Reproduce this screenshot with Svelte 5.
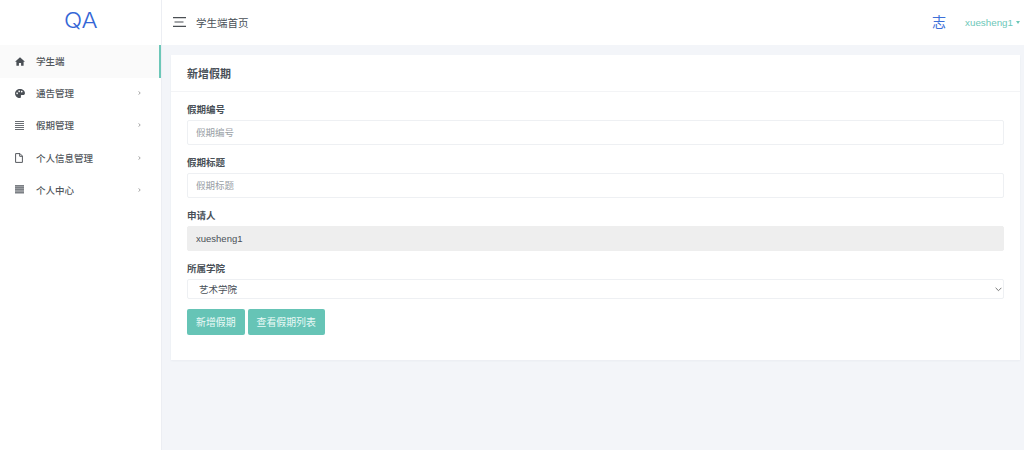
<script>
  const menu = [
    { label: '学生端', icon: 'home', active: true },
    { label: '通告管理', icon: 'palette', arrow: true },
    { label: '假期管理', icon: 'lines', arrow: true },
    { label: '个人信息管理', icon: 'file', arrow: true },
    { label: '个人中心', icon: 'block', arrow: true }
  ];
</script>

<div class="page">
  <aside class="sidebar">
    <div class="logo"><span class="logo-text">QA</span></div>
    <nav>
      {#each menu as item}
        <div class="item" class:active={item.active}>
          <span class="ico">
            {#if item.icon === 'home'}
              <svg width="10" height="9" viewBox="0 0 11 10"><path d="M5.5 0.3 L11 5.2 L9.5 5.2 L9.5 9.8 L6.7 9.8 L6.7 6.6 L4.3 6.6 L4.3 9.8 L1.5 9.8 L1.5 5.2 L0 5.2 Z" fill="#4a4f55"/></svg>
            {:else if item.icon === 'palette'}
              <svg width="10" height="9" viewBox="0 0 11 10"><path fill-rule="evenodd" d="M5.5 0 C8.6 0 11 2 11 4.6 C11 6.4 9.4 6.8 8 6.6 C6.8 6.5 6.2 7 6.5 8 C6.8 9 6.3 10 5.2 10 C2.3 10 0 7.8 0 5 C0 2.2 2.4 0 5.5 0 Z M2.3 3.9 a0.9 0.9 0 1 0 0.01 0 Z M4.6 1.6 a0.9 0.9 0 1 0 0.01 0 Z M7.4 2 a0.9 0.9 0 1 0 0.01 0 Z" fill="#4a4f55"/></svg>
            {:else if item.icon === 'lines'}
              <svg width="9" height="9" viewBox="0 0 9 9"><path d="M0 .5h9M0 2.5h9M0 4.5h9M0 6.5h9M0 8.5h9" stroke="#6a6e73" stroke-width="1"/></svg>
            {:else if item.icon === 'file'}
              <svg width="8" height="10" viewBox="0 0 8 10"><path d="M.6.6h4.4l2.4 2.4v6.4H.6z M4.7.6v2.7h2.7" fill="none" stroke="#55595e" stroke-width="1"/></svg>
            {:else}
              <svg width="9" height="9" viewBox="0 0 9 9"><path d="M0 .75h9M0 2.5h9M0 4.25h9M0 6h9M0 7.75h9" stroke="#7b7f84" stroke-width="1.35"/></svg>
            {/if}
          </span>
          <span class="label">{item.label}</span>
          {#if item.arrow}
            <svg class="arrow" width="3" height="4" viewBox="0 0 3 4"><path d="M.7.4l1.5 1.6-1.5 1.6" fill="none" stroke="#777" stroke-width=".7"/></svg>
          {/if}
        </div>
      {/each}
    </nav>
  </aside>

  <div class="main">
    <header class="topbar">
      <svg class="burger" width="13" height="10" viewBox="0 0 13 10"><path d="M0 .6h13M1.5 5h9M0 9.4h13" stroke="#4b4f54" stroke-width="1.1"/></svg>
      <span class="crumb">学生端首页</span>
      <span class="spacer"></span>
      <span class="zhi">志</span>
      <span class="user">xuesheng1</span>
      <span class="caret"></span>
    </header>

    <main class="content">
      <section class="card">
        <h1 class="card-title">新增假期</h1>
        <form class="form">
          <div class="field">
            <label for="code">假期编号</label>
            <input id="code" placeholder="假期编号" />
          </div>
          <div class="field">
            <label for="title">假期标题</label>
            <input id="title" placeholder="假期标题" />
          </div>
          <div class="field">
            <label for="who">申请人</label>
            <input id="who" class="disabled" value="xuesheng1" disabled />
          </div>
          <div class="field last">
            <label for="college">所属学院</label>
            <div class="select-wrap">
              <select id="college"><option>艺术学院</option></select>
              <svg class="chev" width="7" height="5" viewBox="0 0 7 5"><path d="M.6.8l2.9 2.9L6.4.8" fill="none" stroke="#777" stroke-width="1"/></svg>
            </div>
          </div>
          <div class="buttons">
            <button type="button">新增假期</button>
            <button type="button">查看假期列表</button>
          </div>
        </form>
      </section>
    </main>
  </div>
</div>

<style>
  :global(body) {
    margin: 0;
    background: #f3f5f9;
  }
  .page {
    display: flex;
    width: 1024px;
    height: 450px;
    overflow: hidden;
    font-family: "Liberation Sans", "Noto Sans CJK SC", sans-serif;
    color: #495057;
    background: #f3f5f9;
  }
  .sidebar {
    width: 162px;
    flex: none;
    background: #fff;
    border-right: 1px solid #eceef3;
    box-sizing: border-box;
  }
  .logo {
    height: 45px;
    display: flex;
    align-items: center;
    justify-content: center;
    font-family: Inter, sans-serif;
    font-weight: 300;
    font-size: 21px;
    color: #3566d6;
    padding: 0 0 4px 1px;
    box-sizing: border-box;
  }
  .logo-text {
    display: inline-block;
    transform: scaleX(1.14);
  }
  nav {
    display: flex;
    flex-direction: column;
  }
  .item {
    height: 32.2px;
    display: flex;
    align-items: center;
    padding-left: 15px;
    font-size: 9.5px;
    font-weight: 500;
    color: #52575c;
    box-sizing: border-box;
  }
  .item.active {
    background: #fafafa;
    border-right: 2px solid #6cc7b8;
    height: 33px;
    padding-bottom: 1px;
    margin-bottom: -0.8px;
  }
  .ico {
    width: 21px;
    flex: none;
    display: flex;
    align-items: center;
  }
  .label {
    flex: 1;
  }
  .arrow {
    margin-right: 20px;
  }
  .main {
    flex: 1;
    min-width: 0;
    display: flex;
    flex-direction: column;
  }
  .topbar {
    height: 45px;
    flex: none;
    background: #fff;
    display: flex;
    align-items: center;
    padding-left: 11px;
    padding-bottom: 1px;
    box-sizing: border-box;
  }
  .burger {
    margin-right: 10px;
  }
  .crumb {
    font-size: 10.5px;
    color: #495057;
  }
  .spacer {
    flex: 1;
  }
  .zhi {
    font-size: 14px;
    color: #3d6fd8;
    margin-right: 19px;
    margin-bottom: 3px;
  }
  .user {
    font-size: 9.8px;
    color: #6cc7b8;
  }
  .caret {
    width: 0;
    height: 0;
    border-left: 2.5px solid transparent;
    border-right: 2.5px solid transparent;
    border-top: 3px solid #6cc7b8;
    margin: 0 4px 0 3px;
  }
  .content {
    flex: 1;
    padding: 10px 4px 0 9px;
  }
  .card {
    height: 305px;
    background: #fff;
    box-shadow: 0 1px 2px rgba(60, 70, 90, .05);
  }
  .card-title {
    height: 37px;
    margin: 0;
    padding: 0 16px;
    display: flex;
    align-items: center;
    font-size: 11px;
    font-weight: 700;
    color: #495057;
    border-bottom: 1px solid #f3f4f6;
    box-sizing: border-box;
  }
  .form {
    padding: 8px 16px 0;
    display: flex;
    flex-direction: column;
  }
  .field {
    display: flex;
    flex-direction: column;
    margin-bottom: 8px;
  }
  .field.last {
    margin-bottom: 10px;
  }
  label {
    font-size: 9.5px;
    font-weight: 700;
    color: #495057;
    height: 18px;
    margin-bottom: 2px;
    display: flex;
    align-items: center;
  }
  input {
    height: 25px;
    border: 1px solid #eef0f3;
    border-radius: 2px;
    background: #fff;
    padding: 0 8px;
    font: inherit;
    font-size: 9.5px;
    color: #495057;
    box-sizing: border-box;
    outline: none;
  }
  input::placeholder {
    color: #9aa0a6;
  }
  input.disabled {
    background: #eeeeee;
    border-color: #eeeeee;
    color: #495057;
    opacity: 1;
  }
  .select-wrap {
    position: relative;
  }
  select {
    appearance: none;
    width: 100%;
    height: 20px;
    border: 1px solid #eef0f3;
    border-radius: 2px;
    background: #fff;
    padding: 0 11px;
    font: inherit;
    font-size: 9.5px;
    color: #495057;
    box-sizing: border-box;
    display: block;
  }
  .chev {
    position: absolute;
    right: 2px;
    top: 8px;
    pointer-events: none;
  }
  .buttons {
    display: flex;
    gap: 3px;
  }
  button {
    height: 26px;
    padding: 0 9px;
    border: 0;
    border-radius: 2px;
    background: #66c4b6;
    color: #eafaf6;
    font: inherit;
    font-size: 9.9px;
  }
</style>
